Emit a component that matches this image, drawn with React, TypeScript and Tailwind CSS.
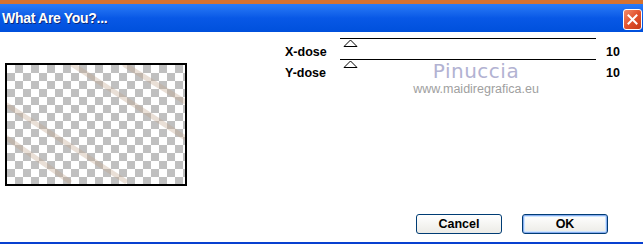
import React from 'react';

const Slider: React.FC<{ label: string; value: number }> = ({ label, value }) => (
  <div className="flex h-[21px] items-center">
    <span className="w-[55px] pt-[7px] text-[12.5px] font-bold text-black">{label}</span>
    <div className="relative h-full w-[256px]">
      <div className="h-[1px] w-full bg-black" />
      {/* slider thumb */}
      <svg className="absolute left-[3px] top-[1px]" width="15" height="8" viewBox="0 0 15 8">
        <path d="M1 7.5 L7.5 1 L14 7.5 Z" fill="white" stroke="black" strokeWidth="1" />
      </svg>
    </div>
    <span className="ml-[10px] pt-[7px] text-[12.5px] font-bold text-black">{value}</span>
  </div>
);

const Preview: React.FC = () => (
  <div
    className="relative h-[123px] w-[182px] border-2 border-black"
    style={{
      backgroundColor: '#ffffff',
      backgroundImage:
        'linear-gradient(45deg, #c0c0c0 25%, transparent 25%, transparent 75%, #c0c0c0 75%), linear-gradient(45deg, #c0c0c0 25%, transparent 25%, transparent 75%, #c0c0c0 75%)',
      backgroundSize: '16px 16px',
      backgroundPosition: '0 0, 8px 8px',
    }}
  >
    {/* faint diagonal strokes of the effect */}
    <svg className="absolute inset-0" width="178" height="119" viewBox="0 0 178 119">
      <g stroke="#c2a48c" strokeWidth="5" strokeLinecap="round" opacity="0.35">
        <line x1="66" y1="0" x2="180" y2="74" />
        <line x1="118" y1="0" x2="180" y2="38" />
        <line x1="0" y1="40" x2="118" y2="116" />
        <line x1="0" y1="73" x2="62" y2="116" />
      </g>
    </svg>
  </div>
);

const XpButton: React.FC<{ label: string; focused?: boolean }> = ({ label, focused }) => (
  <button
    className={
      'flex h-[20px] w-[86px] items-center justify-center rounded-[3px] border border-[#003c74] bg-gradient-to-b from-white to-[#ecebe6] text-[12.5px] font-bold text-black ' +
      (focused ? 'shadow-[inset_0_0_0_1px_#89adf0,inset_0_0_0_2px_#cee7ff]' : '')
    }
  >
    {label}
  </button>
);

export default function App() {
  return (
    <div
      className="flex h-[244px] w-[643px] flex-col overflow-hidden bg-white"
      style={{ fontFamily: '"Liberation Sans", Arial, sans-serif' }}
    >
      <div className="h-[4px] bg-[#d7722e]" />
      {/* title bar */}
      <div className="flex h-[28px] items-center justify-between bg-gradient-to-b from-[#2a7cf7] via-[#0858e6] to-[#0050dc] pl-[2px] pr-[1px]">
        <span className="text-[14px] font-bold tracking-[-0.3px] text-white [text-shadow:1px_1px_0_#0a2a7a]">
          What Are You?...
        </span>
        <div className="mt-[2px] flex h-[21px] w-[19px] items-center justify-center rounded-[3px] border border-white bg-gradient-to-br from-[#f08b6a] via-[#e2512d] to-[#c53a16]">
          <svg width="11" height="11" viewBox="0 0 11 11">
            <path d="M1.5 1.5 L9.5 9.5 M9.5 1.5 L1.5 9.5" stroke="white" strokeWidth="2" strokeLinecap="square" />
          </svg>
        </div>
      </div>

      {/* body */}
      <div className="relative flex flex-1 flex-col">
        <div className="flex">
          <div className="pl-[5px] pt-[31px]">
            <Preview />
          </div>
          <div className="ml-[98px] flex flex-col pt-[6px]">
            <Slider label="X-dose" value={10} />
            <Slider label="Y-dose" value={10} />
            <div className="-mt-[19px] ml-[120px] flex w-[142px] flex-col items-center leading-none">
              <span className="text-[20px] tracking-[0.5px] text-[#b2b2d2]" style={{ fontFamily: '"DejaVu Sans", sans-serif' }}>
                Pinuccia
              </span>
              <span className="mt-[2px] text-[12.5px] text-[#a0a0a0]">www.maidiregrafica.eu</span>
            </div>
          </div>
        </div>
        <div className="mt-auto flex justify-end gap-[20px] pb-[8px] pr-[35px]">
          <XpButton label="Cancel" />
          <XpButton label="OK" focused />
        </div>
      </div>
      <div className="h-[2px] bg-[#0840d0]" />
    </div>
  );
}
